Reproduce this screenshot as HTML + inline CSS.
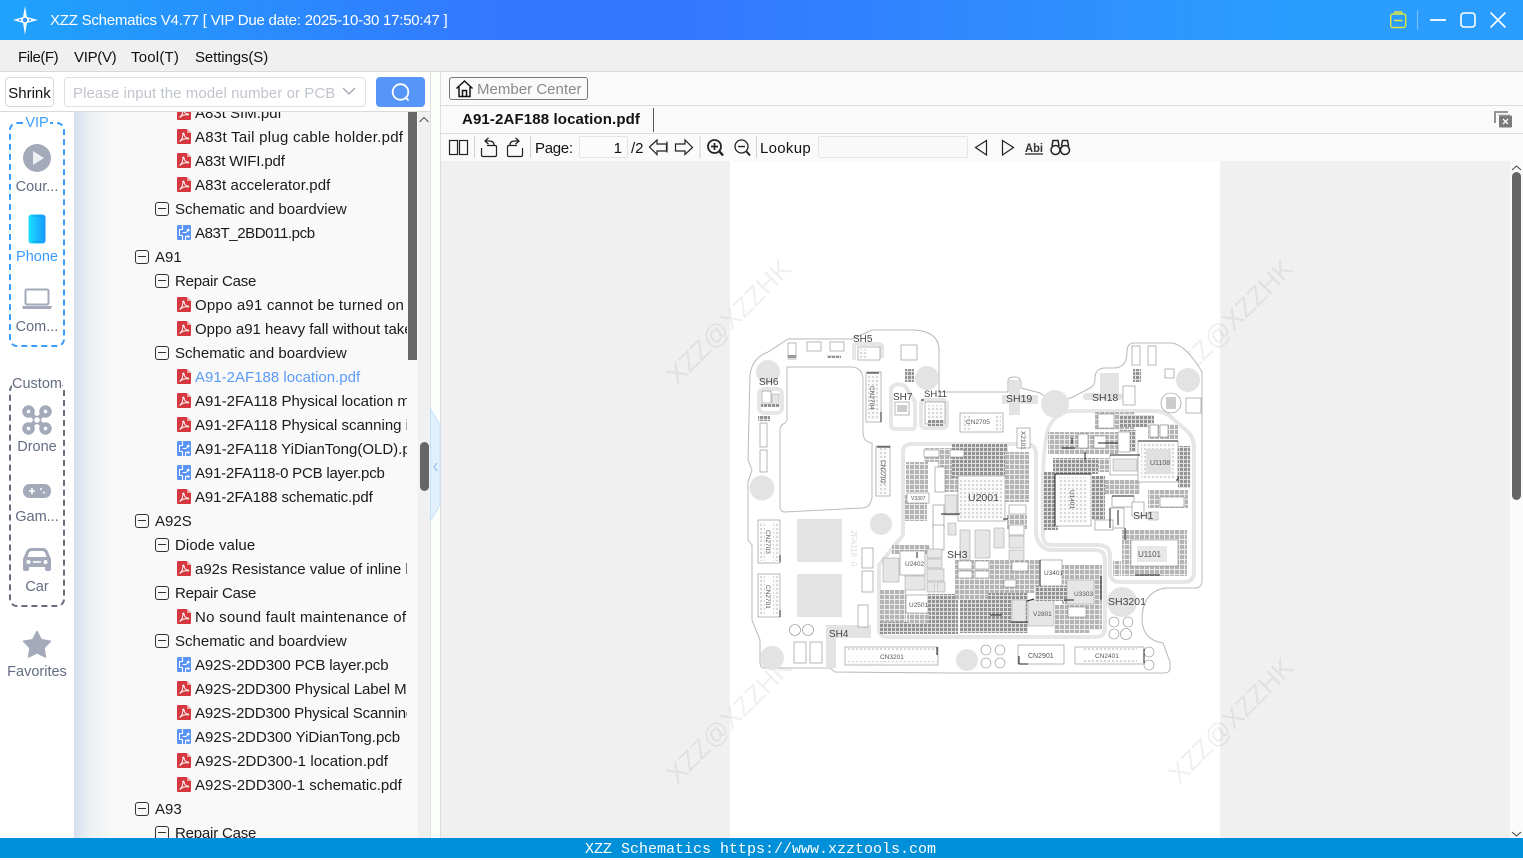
<!DOCTYPE html>
<html><head><meta charset="utf-8"><title>XZZ Schematics</title>
<style>
*{box-sizing:border-box}
html,body{margin:0;padding:0;width:1523px;height:858px;overflow:hidden;background:#fff;font-family:"Liberation Sans","Noto Sans CJK SC",sans-serif;font-size:15px;color:#111}
.a{position:absolute}
.t{position:absolute;white-space:nowrap;line-height:20px;margin-top:1px}
#tree{position:absolute;left:0;top:112px;width:407px;height:726px;overflow:hidden}
#in{position:absolute;left:0;top:1px;width:407px;height:726px}
.r{position:absolute;height:24px;line-height:24px;white-space:nowrap;font-size:15px;color:#1a1a1a;margin-top:1px}
.e{position:absolute;width:14px;height:14px;border:1.3px solid #333;border-radius:3px}
.e:after{content:"";position:absolute;left:2px;right:2px;top:5px;height:1.3px;background:#333}
.side{position:absolute;left:0;width:74px;text-align:center;font-size:14.5px;color:#636c82;line-height:18px;margin-top:1px}
.w{fill:#fff;stroke:#888;stroke-width:.6}
.g{fill:#e6e6e6;stroke:#999;stroke-width:.5}
</style></head><body>
<svg width="0" height="0" style="position:absolute"><defs>
<symbol id="pdf" viewBox="0 0 14 15"><path d="M0 1Q0 0 1 0H10L14 4V14Q14 15 13 15H1Q0 15 0 14Z" fill="#d5383f"/><path d="M10 0L14 4H10Z" fill="#f0a0a0"/><path d="M3 12C5 11 6 7 6 4.500C6 3.500 7 4 7 5C7 7.500 9 9 11.500 9.200C12 9.500 11.500 10 11 9.800C8.500 9.500 6 10 4.500 11C3.500 12.500 2.500 12.500 3 12Z" fill="none" stroke="#fff" stroke-width="1"/></symbol>
<symbol id="pcb" viewBox="0 0 14 15"><rect width="14" height="15" rx="1.500" fill="#5b95f6"/><path d="M5.500 0V4.500H2.500V10.500H5.500V15M5.500 7.500H9L10.500 6M8.500 15V11.500H10.500" fill="none" stroke="#fff" stroke-width="1"/><circle cx="11.300" cy="5" r="1.300" fill="#fff"/><circle cx="11.300" cy="11.500" r="1.300" fill="#fff"/></symbol>
<pattern id="p1" width="4" height="4" patternUnits="userSpaceOnUse"><rect width="4" height="4" fill="#e0e0e0"/><rect width="3" height="3" fill="#929292"/></pattern>
<pattern id="p2" width="5" height="5" patternUnits="userSpaceOnUse"><rect width="5" height="5" fill="#ececec"/><rect width="4" height="4" fill="#b4b4b4"/></pattern>
<pattern id="p3" width="4" height="4" patternUnits="userSpaceOnUse"><rect width="4" height="4" fill="#fafafa"/><rect width="2" height="2" fill="#d8d8d8"/></pattern>
</defs></svg>

<!-- title bar -->
<div class="a" style="left:0;top:0;width:1523px;height:40px;background:linear-gradient(90deg,#1ea3fc 0,#3477ff 33%,#3477ff 45%,#2b9dff 85%,#2b9dff 100%)"></div>
<svg class="a" style="left:10px;top:5px" width="30" height="30" viewBox="0 0 30 30"><path d="M15 1L17 12L28 15L17 18L15 30L13 18L3 15L13 12Z" fill="#fff" opacity=".95"/><circle cx="15" cy="15" r="2.200" fill="#3a90f0"/><circle cx="10" cy="15" r="1" fill="#3a90f0"/><circle cx="20" cy="15" r="1" fill="#3a90f0"/></svg>
<div class="t" style="left:50px;top:10px;color:#fff;font-size:15px;letter-spacing:-.23px">XZZ Schematics V4.77 [ VIP Due date: 2025-10-30 17:50:47 ]</div>
<svg class="a" style="left:1385px;top:8px" width="125" height="24" viewBox="0 0 125 24"><g fill="none" stroke="#dfe63f" stroke-width="1.400"><rect x="5.700" y="6" width="15" height="13.500" rx="2"/><path d="M10 6V4H16.500V6M9 12.500H17.500"/></g><path d="M32.500 2V22" stroke="#7cc0ff" stroke-width="1"/><g fill="none" stroke="#fff"><path d="M45 12H61" stroke-width="1.800"/><rect x="76" y="5" width="14" height="14" rx="3" stroke-width="1.600"/><path d="M105.500 4.500L120.500 19.500M120.500 4.500L105.500 19.500" stroke-width="1.600"/></g></svg>

<!-- menu -->
<div class="a" style="left:0;top:40px;width:1523px;height:32px;background:#f0f0f0;border-bottom:1px solid #d9d9d9"></div>
<div class="t" style="left:18px;top:47px;letter-spacing:-.45px">File(F)</div>
<div class="t" style="left:74px;top:47px;letter-spacing:-.3px">VIP(V)</div>
<div class="t" style="left:131px;top:47px;letter-spacing:.2px">Tool(T)</div>
<div class="t" style="left:195px;top:47px;letter-spacing:-.1px">Settings(S)</div>

<!-- left panel -->
<div class="a" style="left:0;top:72px;width:431px;height:766px;background:#fff"></div>
<div class="a" style="left:5px;top:77px;width:49px;height:30px;border:1px solid #d9d9d9;border-radius:4px;text-align:center;line-height:31px;font-size:15px">Shrink</div>
<div class="a" style="left:64px;top:77px;width:302px;height:30px;border:1px solid #dcdfe6;border-radius:4px;background:#fff;line-height:31px;padding-left:8px;color:#c0c4cc;font-size:15px;white-space:nowrap;letter-spacing:.06px">Please input the model number or PCB</div>
<svg class="a" style="left:342px;top:86px" width="14" height="10"><path d="M1 2L7 8L13 2" fill="none" stroke="#a8abb2" stroke-width="1.400"/></svg>
<div class="a" style="left:376px;top:77px;width:49px;height:30px;border-radius:4px;background:#5596f8"></div>
<svg class="a" style="left:390px;top:82px" width="22" height="21"><circle cx="10.500" cy="10" r="7.800" fill="none" stroke="#fff" stroke-width="1.800"/><path d="M15.500 15.500L18.500 18.500" stroke="#fff" stroke-width="1.800"/></svg>
<div class="a" style="left:0;top:111px;width:431px;height:1px;background:#d9d9d9"></div>

<!-- tree bg -->
<div class="a" style="left:74px;top:112px;width:344px;height:726px;background:linear-gradient(90deg,#d6e0f1 0,#eef0f5 16px,#f9f9f9 40px,#f9f9f9 100%)"></div>
<div class="a" style="left:418px;top:112px;width:12px;height:726px;background:#f0f0f0"></div>
<div class="a" style="left:430px;top:72px;width:1px;height:766px;background:#dfdfdf"></div>
<div class="a" style="left:431px;top:72px;width:10px;height:766px;background:#fbfffb"></div>
<div class="a" style="left:440px;top:72px;width:1px;height:766px;background:#dedede"></div>
<div class="a" style="left:408px;top:112px;width:9px;height:248px;background:#686868"></div>
<div class="a" style="left:420px;top:442px;width:9px;height:49px;border-radius:5px;background:#666"></div>
<svg class="a" style="left:418px;top:115px" width="12" height="10"><path d="M1.500 7L6 2.500L10.500 7" fill="none" stroke="#555" stroke-width="1"/></svg>
<svg class="a" style="left:430px;top:405px" width="11" height="120"><path d="M0.500 4L10 20V100L0.500 116Z" fill="#e2f0fd" stroke="#c8e2fa"/><path d="M7 58L4 62L7 66" fill="none" stroke="#7bb6ef" stroke-width="1"/></svg>

<!-- tree rows -->
<div id="tree"><div id="in">
<svg class="a" style="left:177px;top:-8px" width="14" height="15"><use href="#pdf"/></svg><div class="r" style="left:195px;top:-12px">A83t SIM.pdf</div>
<svg class="a" style="left:177px;top:16px" width="14" height="15"><use href="#pdf"/></svg><div class="r" style="left:195px;top:12px;letter-spacing:.27px">A83t Tail plug cable holder.pdf</div>
<svg class="a" style="left:177px;top:40px" width="14" height="15"><use href="#pdf"/></svg><div class="r" style="left:195px;top:36px;letter-spacing:-.15px">A83t WIFI.pdf</div>
<svg class="a" style="left:177px;top:64px" width="14" height="15"><use href="#pdf"/></svg><div class="r" style="left:195px;top:60px;letter-spacing:.1px">A83t accelerator.pdf</div>
<div class="e" style="left:155px;top:89px"></div><div class="r" style="left:175px;top:84px">Schematic and boardview</div>
<svg class="a" style="left:177px;top:112px" width="14" height="15"><use href="#pcb"/></svg><div class="r" style="left:195px;top:108px;letter-spacing:-.4px">A83T_2BD011.pcb</div>
<div class="e" style="left:135px;top:137px"></div><div class="r" style="left:155px;top:132px">A91</div>
<div class="e" style="left:155px;top:161px"></div><div class="r" style="left:175px;top:156px;letter-spacing:-.2px">Repair Case</div>
<svg class="a" style="left:177px;top:184px" width="14" height="15"><use href="#pdf"/></svg><div class="r" style="left:195px;top:180px;letter-spacing:.2px">Oppo a91 cannot be turned on</div>
<svg class="a" style="left:177px;top:208px" width="14" height="15"><use href="#pdf"/></svg><div class="r" style="left:195px;top:204px">Oppo a91 heavy fall without take</div>
<div class="e" style="left:155px;top:233px"></div><div class="r" style="left:175px;top:228px">Schematic and boardview</div>
<svg class="a" style="left:177px;top:256px" width="14" height="15"><use href="#pdf"/></svg><div class="r" style="left:195px;top:252px;color:#5b9bf8">A91-2AF188 location.pdf</div>
<svg class="a" style="left:177px;top:280px" width="14" height="15"><use href="#pdf"/></svg><div class="r" style="left:195px;top:276px">A91-2FA118 Physical location map</div>
<svg class="a" style="left:177px;top:304px" width="14" height="15"><use href="#pdf"/></svg><div class="r" style="left:195px;top:300px">A91-2FA118 Physical scanning image</div>
<svg class="a" style="left:177px;top:328px" width="14" height="15"><use href="#pcb"/></svg><div class="r" style="left:195px;top:324px">A91-2FA118 YiDianTong(OLD).pcb</div>
<svg class="a" style="left:177px;top:352px" width="14" height="15"><use href="#pcb"/></svg><div class="r" style="left:195px;top:348px;letter-spacing:-.2px">A91-2FA118-0 PCB layer.pcb</div>
<svg class="a" style="left:177px;top:376px" width="14" height="15"><use href="#pdf"/></svg><div class="r" style="left:195px;top:372px;letter-spacing:-.1px">A91-2FA188 schematic.pdf</div>
<div class="e" style="left:135px;top:401px"></div><div class="r" style="left:155px;top:396px">A92S</div>
<div class="e" style="left:155px;top:425px"></div><div class="r" style="left:175px;top:420px;letter-spacing:.1px">Diode value</div>
<svg class="a" style="left:177px;top:448px" width="14" height="15"><use href="#pdf"/></svg><div class="r" style="left:195px;top:444px;letter-spacing:-.02px">a92s Resistance value of inline h</div>
<div class="e" style="left:155px;top:473px"></div><div class="r" style="left:175px;top:468px;letter-spacing:-.2px">Repair Case</div>
<svg class="a" style="left:177px;top:496px" width="14" height="15"><use href="#pdf"/></svg><div class="r" style="left:195px;top:492px;letter-spacing:.27px">No sound fault maintenance of</div>
<div class="e" style="left:155px;top:521px"></div><div class="r" style="left:175px;top:516px">Schematic and boardview</div>
<svg class="a" style="left:177px;top:544px" width="14" height="15"><use href="#pcb"/></svg><div class="r" style="left:195px;top:540px;letter-spacing:-.1px">A92S-2DD300 PCB layer.pcb</div>
<svg class="a" style="left:177px;top:568px" width="14" height="15"><use href="#pdf"/></svg><div class="r" style="left:195px;top:564px;letter-spacing:-.1px">A92S-2DD300 Physical Label Map</div>
<svg class="a" style="left:177px;top:592px" width="14" height="15"><use href="#pdf"/></svg><div class="r" style="left:195px;top:588px;letter-spacing:-.15px">A92S-2DD300 Physical Scanning</div>
<svg class="a" style="left:177px;top:616px" width="14" height="15"><use href="#pcb"/></svg><div class="r" style="left:195px;top:612px">A92S-2DD300 YiDianTong.pcb</div>
<svg class="a" style="left:177px;top:640px" width="14" height="15"><use href="#pdf"/></svg><div class="r" style="left:195px;top:636px;letter-spacing:.08px">A92S-2DD300-1 location.pdf</div>
<svg class="a" style="left:177px;top:664px" width="14" height="15"><use href="#pdf"/></svg><div class="r" style="left:195px;top:660px">A92S-2DD300-1 schematic.pdf</div>
<div class="e" style="left:135px;top:689px"></div><div class="r" style="left:155px;top:684px">A93</div>
<div class="e" style="left:155px;top:713px"></div><div class="r" style="left:175px;top:708px;letter-spacing:-.2px">Repair Case</div>
</div></div>

<!-- sidebar -->
<div class="a" style="left:9px;top:122px;width:56px;height:225px;border:2px dashed #3a9dfb;border-radius:8px"></div>
<div class="side" style="top:113px;color:#3a9dfb"><span style="background:#fff;padding:0 1px">VIP</span></div>
<svg class="a" style="left:22px;top:143px" width="30" height="30"><circle cx="15" cy="15" r="14" fill="#a4aaba"/><path d="M11 8L22 15L11 22Z" fill="#eef0f4"/></svg>
<div class="side" style="top:177px">Cour...</div>
<svg class="a" style="left:27px;top:213px" width="20" height="32"><defs><linearGradient id="ph" x1="0" x2="1"><stop offset="0" stop-color="#18e0ff"/><stop offset="1" stop-color="#1a96ff"/></linearGradient></defs><rect x="1.500" y="1.500" width="17" height="29" rx="3" fill="url(#ph)"/><path d="M6 3H14M6 28.500H14" stroke="#0d8fe0" stroke-width=".8"/></svg>
<div class="side" style="top:247px;color:#3a9dfb">Phone</div>
<svg class="a" style="left:22px;top:288px" width="30" height="22"><rect x="3.500" y="1.500" width="23" height="15" rx="1.500" fill="none" stroke="#a4aaba" stroke-width="2"/><path d="M0 18H30L29 21H1Z" fill="#a4aaba"/></svg>
<div class="side" style="top:317px">Com...</div>
<div class="a" style="left:9px;top:383px;width:56px;height:224px;border:2px dashed #676c7e;border-radius:8px"></div>
<div class="side" style="top:374px"><span style="background:#fff">Custom</span></div>
<svg class="a" style="left:22px;top:405px" width="30" height="30"><g fill="none" stroke="#a4aaba" stroke-width="4.500"><circle cx="6.500" cy="6.500" r="4"/><circle cx="23.500" cy="6.500" r="4"/><circle cx="6.500" cy="23.500" r="4"/><circle cx="23.500" cy="23.500" r="4"/><path d="M9 9L21 21M21 9L9 21"/></g><circle cx="15" cy="15" r="3.500" fill="#fff" stroke="#a4aaba" stroke-width="1.500"/></svg>
<div class="side" style="top:437px">Drone</div>
<svg class="a" style="left:22px;top:483px" width="30" height="16"><rect x="1" y="1" width="28" height="14" rx="6.500" fill="#a4aaba"/><path d="M7 8H13M10 5V11" stroke="#fff" stroke-width="1.600"/><circle cx="19" cy="6" r="1" fill="#fff"/><circle cx="22" cy="9.500" r="1" fill="#fff"/></svg>
<div class="side" style="top:507px">Gam...</div>
<svg class="a" style="left:22px;top:547px" width="30" height="25"><path d="M1 12L4 5Q5.500 1 9 1H21Q24.500 1 26 5L29 12V22Q29 24 27 24H25Q23 24 23 22V20H7V22Q7 24 5 24H3Q1 24 1 22Z" fill="#a4aaba"/><path d="M5.500 10L7 5.500Q8 4 9.500 4H20.500Q22 4 23 5.500L24.500 10Z" fill="#fff"/><circle cx="6.500" cy="15" r="2" fill="#fff"/><circle cx="23.500" cy="15" r="2" fill="#fff"/><path d="M11 15H19" stroke="#fff" stroke-width="1.600"/></svg>
<div class="side" style="top:577px">Car</div>
<svg class="a" style="left:22px;top:630px" width="30" height="28"><path d="M15 1.500L19.300 9.700L28.500 11.200L22 17.800L23.400 27L15 22.800L6.600 27L8 17.800L1.500 11.200L10.700 9.700Z" fill="#a4aaba" stroke="#a4aaba" stroke-width="1.500" stroke-linejoin="round"/></svg>
<div class="side" style="top:662px">Favorites</div>

<!-- right panel -->
<div class="a" style="left:441px;top:72px;width:1082px;height:90px;background:#fafafa"></div>
<div class="a" style="left:441px;top:105px;width:1082px;height:1px;background:#dcdcdc"></div>
<div class="a" style="left:441px;top:133px;width:1082px;height:1px;background:#dcdcdc"></div>
<div class="a" style="left:449px;top:77px;width:139px;height:23px;border:1px solid #777;border-radius:3px"></div>
<svg class="a" style="left:455px;top:79px" width="19" height="19"><path d="M1.500 9.500L9.500 2L17.500 9.500M4 8V17.500H15V8M7.500 17.500V11.500H11.500V17.500" fill="none" stroke="#111" stroke-width="1.500"/></svg>
<div class="t" style="left:477px;top:79px;color:#8a8a8a;font-size:15px;letter-spacing:.02px">Member Center</div>
<div class="t" style="left:462px;top:109px;font-weight:bold;font-size:15px;color:#111;letter-spacing:.13px">A91-2AF188 location.pdf</div>
<div class="a" style="left:653px;top:108px;width:1px;height:24px;background:#555"></div>
<svg class="a" style="left:1494px;top:110px" width="19" height="18"><path d="M1 13V2H14" fill="none" stroke="#888" stroke-width="1.800"/><path d="M4 5H16" stroke="#bbb" stroke-width="1"/><rect x="5" y="5.500" width="13" height="12" rx="1" fill="#7a7a7a"/><path d="M9 9L14 14M14 9L9 14" stroke="#fff" stroke-width="1.300"/></svg>

<!-- toolbar -->
<svg class="a" style="left:442px;top:134px" width="640" height="27" viewBox="442 134 640 27">
<g fill="none" stroke="#222" stroke-width="1.200">
<rect x="449.500" y="140.500" width="8" height="14"/><rect x="459.500" y="140.500" width="8" height="14"/>
<path d="M481.500 148V155Q481.500 156.500 483 156.500H495Q496.500 156.500 496.500 155V147Q496.500 145.500 495 145.500H487"/><path d="M494 145C494 141.500 491.500 141 489 141H485M488.500 137.800L485 141L488.500 144.200" stroke-width="1.300"/>
<path d="M522.500 148V155Q522.500 156.500 521 156.500H509Q507.500 156.500 507.500 155V147Q507.500 145.500 509 145.500H517"/><path d="M510 145C510 141.500 512.500 141 515 141H519M515.500 137.800L519 141L515.500 144.200" stroke-width="1.300"/>
<path d="M667 141.500V152.500M649.500 147L657 140V144H666.500V151H657V154.500Z"/>
<path d="M675.500 144H685V140L692.500 147.500L685 154.500V151H675.500Z"/>
<circle cx="714.500" cy="146.500" r="6.500" stroke-width="1.800"/><path d="M719.500 151.500L723 155.500" stroke-width="2.400"/><path d="M711 146.500H718M714.500 143V150" stroke-width="1.700"/>
<circle cx="741.500" cy="146.500" r="6.500" stroke-width="1.300"/><path d="M746.500 151.500L750 155.500" stroke-width="2"/><path d="M738 146.500H745" stroke-width="1.400"/>
<path d="M986.500 140.500L975.500 147.500L986.500 155Z"/><path d="M1002.500 140.500L1013.500 147.500L1002.500 155Z"/>
<path d="M1025 154H1043" stroke-width="1.300"/>
<circle cx="1055.500" cy="150" r="4.500" stroke-width="1.500"/><circle cx="1065" cy="150" r="4.500" stroke-width="1.500"/><path d="M1052 146L1053 140.500H1058L1059 146M1061.500 146L1062.500 140.500H1067.500L1068.500 146M1059 148H1061.500" stroke-width="1.500"/>
</g>
<g stroke="#cfcfcf"><path d="M474.500 136V158M530.500 136V158M700 136V158M756.500 136V158"/></g>
<text x="1025" y="152" font-family="Liberation Sans" font-size="12" font-weight="bold" fill="#333" textLength="18" lengthAdjust="spacingAndGlyphs">Abi</text>
</svg>
<div class="t" style="left:535px;top:138px;letter-spacing:-.3px">Page:</div>
<div class="a" style="left:579px;top:136px;width:49px;height:22px;border:1px solid #e4e4e4;border-radius:2px;background:#fbfbfb;text-align:right;padding-right:5px;line-height:23px">1</div>
<div class="t" style="left:631px;top:138px">/2</div>
<div class="t" style="left:760px;top:138px;letter-spacing:.3px">Lookup</div>
<div class="a" style="left:818px;top:136px;width:150px;height:22px;border:1px solid #e4e4e4;border-radius:2px;background:#f9f9f9"></div>

<!-- content -->
<div class="a" style="left:441px;top:161px;width:1069px;height:677px;background:#f0f0f0"></div>
<div class="a" style="left:730px;top:161px;width:490px;height:677px;background:#fff"></div>
<div class="a" style="left:1510px;top:161px;width:13px;height:677px;background:#fafafa"></div>
<div class="a" style="left:1512px;top:172px;width:9px;height:328px;border-radius:5px;background:#666"></div>
<svg class="a" style="left:1510px;top:164px" width="13" height="8"><path d="M2 6L6.500 2L11 6" fill="none" stroke="#444"/></svg>
<svg class="a" style="left:1510px;top:831px" width="13" height="7"><path d="M2 1L6.500 5L11 1" fill="none" stroke="#444"/></svg>

<!-- board -->
<svg class="a" style="left:0;top:0" width="1523" height="858" viewBox="0 0 1523 858" font-family="Liberation Sans">
<g font-size="26.500" fill="#000" fill-opacity=".06" text-anchor="middle">
<text transform="translate(735,328) rotate(-45)">XZZ@XZZHK</text>
<text transform="translate(1237,328) rotate(-45)">XZZ@XZZHK</text>
<text transform="translate(735,727) rotate(-45)">XZZ@XZZHK</text>
<text transform="translate(1237,727) rotate(-45)">XZZ@XZZHK</text>
</g>
<!-- outline -->
<path d="M788 339H852L872 330H915Q939 332 939 350V392H1008V381Q1008 377 1014 377Q1021 377 1021 383V388L1040 393Q1055 404 1073 397L1090 388Q1095 386 1095 378Q1095 369 1104 368H1115Q1127 367 1127 352Q1127 343 1134 343H1172Q1186 345 1202 372V580Q1202 588 1195 588H1165Q1142 592 1142 620Q1143 640 1163 643L1170 662V668Q1170 673 1164 673H952L835 672L830 668H765Q760 668 760 662V640L752 620V545L748 540V482L752 470L748 460L750 375Q752 358 768 352Z" fill="#fff" stroke="#b8b8b8" stroke-width="1"/>
<path d="M787 367H852Q863 368 863 380V432Q863 442 872 443V498Q870 508 862 508L785 512Q780 512 780 506V430Q780 425 785 423L787 420Z" fill="#fff" stroke="#bcbcbc"/>
<!-- shield contours -->
<g fill="none" stroke="#e6e6e6" stroke-width="4">
<path d="M912 444H1026Q1036 444 1036 455V530Q1036 547 1050 550H1095Q1105 550 1105 560V628Q1105 637 1095 637H888Q879 637 879 628V565L903 535V452Q903 444 912 444Z"/>
<path d="M1043 535Q1041 440 1050 425Q1058 411 1072 411H1155Q1165 411 1172 418L1188 432Q1194 438 1194 448V572Q1194 582 1184 582H1120Q1110 582 1110 572V556Q1110 545 1098 545H1052Q1043 545 1043 535"/>
<rect x="759" y="389" width="23" height="24" rx="5"/><rect x="921" y="400" width="26" height="28" rx="4"/><path d="M891 388V425Q891 429 896 429H912Q915 429 915 424V402L905 386Q896 382 891 388Z"/>
<path d="M854 360V347Q854 344 858 344H878Q882 344 882 347V358"/>
</g>
<!-- gray pads -->
<g fill="#e3e3e3">
<circle cx="768" cy="372" r="12"/><circle cx="762" cy="488" r="12.500"/><circle cx="927" cy="378" r="12"/><circle cx="1055" cy="404" r="14"/><circle cx="1188" cy="380" r="12"/><circle cx="881" cy="524" r="11"/><circle cx="772" cy="658" r="12"/><circle cx="967" cy="660" r="11"/><circle cx="1122" cy="602" r="15"/>
<rect x="797" y="519" width="45" height="43"/><rect x="797" y="574" width="45" height="43"/>
<rect x="1100" y="373" width="19" height="23"/><rect x="1009" y="380" width="11" height="35"/><rect x="1002" y="395" width="36" height="9"/><rect x="1083" y="393" width="40" height="7" rx="3"/>
<path d="M826 625H871V638H836V668H826Z"/>
</g>
<!-- connectors & outlined comps -->
<g>
<rect class="w" x="866" y="372" width="15" height="50"/><rect x="868" y="374" width="11" height="46" fill="url(#p3)"/>
<rect class="w" x="876" y="446" width="14" height="50"/><rect x="878" y="448" width="10" height="46" fill="url(#p3)"/>
<rect class="w" x="758" y="520" width="22" height="43"/><rect x="760" y="522" width="5" height="39" fill="url(#p3)"/><rect x="773" y="522" width="5" height="39" fill="url(#p3)"/>
<rect class="w" x="758" y="574" width="22" height="43"/><rect x="760" y="576" width="5" height="39" fill="url(#p3)"/><rect x="773" y="576" width="5" height="39" fill="url(#p3)"/>
<rect class="w" x="845" y="647" width="93" height="18"/><rect x="847" y="648" width="90" height="3" fill="url(#p3)"/><rect x="847" y="661" width="90" height="3" fill="url(#p3)"/>
<rect class="w" x="1018" y="645" width="46" height="19"/>
<rect class="w" x="1075" y="647" width="69" height="17"/><rect x="1082" y="648" width="55" height="3" fill="url(#p3)"/><rect x="1082" y="660" width="55" height="3" fill="url(#p3)"/>
<rect class="w" x="960" y="413" width="43" height="19"/><rect x="962" y="415" width="8" height="15" fill="url(#p3)"/><rect x="995" y="415" width="6" height="15" fill="url(#p3)"/>
<rect class="w" x="1123" y="386" width="12" height="19"/>
<rect class="w" x="895" y="402" width="14" height="13"/><rect x="897" y="405" width="10" height="7" fill="#ccc"/>
<rect class="w" x="925" y="402" width="20" height="22"/><rect x="928" y="405" width="15" height="15" fill="url(#p3)"/><rect x="928" y="420" width="16" height="6" fill="url(#p1)"/>
<rect class="w" x="858" y="347" width="22" height="13"/><rect x="860" y="349" width="8" height="9" fill="url(#p3)"/>
<rect class="w" x="762" y="391" width="9" height="12"/><rect class="g" x="772" y="394" width="7" height="12"/><rect x="761" y="403" width="18" height="4" fill="url(#p1)"/>
<rect x="758" y="416" width="12" height="5" fill="url(#p1)"/>
<rect x="827" y="355" width="14" height="3" fill="url(#p1)"/>
<rect class="w" x="901" y="345" width="16" height="15"/><rect x="905" y="369" width="9" height="13" fill="url(#p1)"/>
<rect class="w" x="788" y="343" width="8" height="16"/><rect x="788" y="355" width="8" height="3" fill="#999"/>
<rect class="w" x="807" y="342" width="14" height="9"/><rect class="w" x="830" y="342" width="14" height="9"/>
<rect class="w" x="1132" y="346" width="8" height="19"/><rect class="w" x="1148" y="346" width="8" height="19"/><rect x="1133" y="369" width="8" height="13" fill="url(#p1)"/>
<circle class="w" cx="1171" cy="403" r="10"/><rect x="1166" y="397" width="10" height="12" fill="#ccc"/><rect class="w" x="1186" y="398" width="15" height="15"/><rect class="w" x="1165" y="369" width="9" height="9"/>
<rect class="w" x="760" y="423" width="7" height="24"/><rect class="w" x="760" y="450" width="7" height="22"/>
<rect class="w" x="862" y="548" width="11" height="20"/><rect class="w" x="862" y="571" width="11" height="21"/><rect class="w" x="858" y="605" width="10" height="22"/>
<rect class="w" x="794" y="642" width="12" height="21"/><rect class="w" x="810" y="642" width="12" height="21"/>
<circle class="w" cx="795" cy="630" r="5.500"/><circle class="w" cx="808" cy="630" r="5.500"/><circle class="w" cx="986" cy="650" r="5"/><circle class="w" cx="986" cy="663" r="5"/><circle class="w" cx="1000" cy="650" r="5"/><circle class="w" cx="1000" cy="663" r="5"/><circle class="w" cx="1114" cy="622" r="5"/><circle class="w" cx="1128" cy="622" r="5"/><circle class="w" cx="1114" cy="634" r="5"/><circle class="w" cx="1126" cy="634" r="5.500"/><circle class="w" cx="1149" cy="652" r="5"/><circle class="w" cx="1149" cy="665" r="5"/>
</g>
<!-- SH3 cluster upper -->
<g>
<rect x="906" y="462" width="22" height="30" fill="url(#p2)"/>
<rect x="924" y="448" width="32" height="14" fill="url(#p2)"/>
<rect x="905" y="495" width="22" height="26" fill="url(#p2)"/>
<rect x="938" y="462" width="20" height="30" fill="url(#p2)"/>
<rect x="952" y="444" width="56" height="34" fill="url(#p1)"/>
<rect class="w" x="958" y="476" width="47" height="45"/>
<rect x="960" y="478" width="43" height="41" fill="url(#p3)"/>
<rect x="1005" y="452" width="24" height="50" fill="url(#p2)"/>
<rect x="1007" y="515" width="20" height="14" fill="url(#p2)"/>
<rect class="w" x="924" y="450" width="15" height="7"/><rect class="w" x="950" y="450" width="14" height="7"/>
<rect class="w" x="935" y="467" width="10" height="25"/>
<rect class="w" x="907" y="493" width="22" height="10"/>
<rect class="w" x="933" y="505" width="11" height="22"/><rect class="w" x="933" y="525" width="11" height="25"/>
<rect class="g" x="945" y="495" width="12" height="20"/><rect class="g" x="948" y="523" width="8" height="12"/>
<rect class="g" x="960" y="530" width="10" height="30"/><rect class="g" x="975" y="530" width="15" height="28"/><rect class="g" x="994" y="528" width="10" height="20"/>
<rect class="w" x="1009" y="505" width="17" height="9"/><rect class="w" x="1009" y="525" width="15" height="10"/>
<rect class="g" x="1009" y="536" width="15" height="12"/><rect class="g" x="1009" y="550" width="15" height="12"/>
<rect class="w" x="1017" y="428" width="13" height="20"/>
</g>
<!-- SH3 cluster lower -->
<g>
<rect class="g" x="883" y="558" width="16" height="24"/>
<rect x="892" y="545" width="38" height="9" fill="url(#p2)"/>
<rect class="w" x="900" y="551" width="25" height="24"/>
<rect class="g" x="905" y="576" width="20" height="14"/>
<rect class="g" x="927" y="549" width="15" height="9"/><rect class="g" x="927" y="559" width="15" height="9"/><rect class="g" x="927" y="569" width="17" height="12"/><rect class="g" x="927" y="582" width="8" height="10"/><rect class="g" x="937" y="582" width="8" height="10"/>
<rect x="880" y="590" width="26" height="32" fill="url(#p2)"/>
<rect x="880" y="622" width="55" height="12" fill="url(#p1)"/>
<rect class="w" x="906" y="595" width="22" height="18"/>
<rect x="928" y="594" width="30" height="40" fill="url(#p1)"/>
<rect x="907" y="613" width="22" height="10" fill="url(#p2)"/>
<rect x="955" y="560" width="38" height="18" fill="url(#p2)"/>
<rect class="w" x="958" y="561" width="14" height="8"/><rect class="w" x="975" y="561" width="14" height="8"/><rect class="w" x="958" y="571" width="14" height="7"/><rect class="w" x="975" y="571" width="14" height="7"/>
<rect x="955" y="578" width="35" height="22" fill="url(#p2)"/>
<rect x="960" y="600" width="30" height="33" fill="url(#p1)"/>
<rect x="990" y="560" width="50" height="33" fill="url(#p2)"/>
<rect class="w" x="1012" y="562" width="16" height="9"/>
<rect x="988" y="593" width="40" height="40" fill="url(#p1)"/>
<rect class="w" x="1004" y="580" width="12" height="7"/><rect class="g" x="1012" y="600" width="14" height="22"/>
<rect class="g" x="1028" y="600" width="26" height="26"/>
<rect class="w" x="1040" y="560" width="22" height="26"/>
<rect x="1062" y="565" width="40" height="65" fill="url(#p2)"/>
<rect class="g" x="1067" y="580" width="27" height="24"/>
<rect x="1035" y="586" width="32" height="15" fill="url(#p1)"/>
<rect x="1054" y="605" width="36" height="28" fill="url(#p2)"/>
<rect class="w" x="1068" y="607" width="18" height="10"/>
</g>
<!-- right cluster -->
<g>
<rect x="1044" y="472" width="14" height="58" fill="url(#p1)"/>
<rect x="1053" y="458" width="45" height="16" fill="url(#p1)"/>
<rect class="w" x="1055" y="474" width="36" height="52"/>
<rect x="1058" y="477" width="30" height="46" fill="url(#p3)"/>
<rect x="1091" y="476" width="14" height="44" fill="url(#p1)"/>
<rect x="1048" y="432" width="28" height="22" fill="url(#p2)"/>
<rect x="1076" y="432" width="42" height="22" fill="url(#p2)"/>
<rect class="w" x="1078" y="434" width="10" height="14"/><rect class="w" x="1094" y="436" width="12" height="12"/>
<rect x="1095" y="412" width="40" height="18" fill="url(#p2)"/>
<rect class="w" x="1098" y="414" width="16" height="14"/>
<rect x="1120" y="430" width="16" height="22" fill="url(#p1)"/>
<rect class="w" x="1110" y="455" width="30" height="20"/><rect class="g" x="1113" y="459" width="24" height="12"/>
<rect class="w" x="1118" y="432" width="12" height="20"/>
<rect x="1098" y="458" width="12" height="14" fill="url(#p2)"/>
<rect x="1120" y="415" width="34" height="12" fill="url(#p1)"/>
<rect x="1105" y="480" width="35" height="14" fill="url(#p2)"/>
<rect class="w" x="1112" y="496" width="22" height="11"/>
<rect class="w" x="1132" y="502" width="12" height="14"/>
<rect class="w" x="1110" y="508" width="14" height="20"/>
<rect class="w" x="1095" y="520" width="18" height="10"/>
<rect class="w" x="1138" y="441" width="40" height="41"/>
<rect x="1141" y="444" width="34" height="35" fill="url(#p3)"/>
<rect x="1146" y="449" width="25" height="25" fill="#e0e0e0"/>
<rect x="1178" y="446" width="12" height="42" fill="url(#p1)"/>
<rect x="1148" y="490" width="40" height="18" fill="url(#p2)"/><rect class="w" x="1160" y="497" width="24" height="10"/>
<rect x="1122" y="530" width="65" height="46" fill="url(#p2)"/>
<rect class="w" x="1131" y="540" width="47" height="26"/>
<rect x="1137" y="546" width="30" height="16" fill="#e8e8e8"/>
<rect x="1113" y="561" width="8" height="15" fill="url(#p2)"/>
<rect class="g" x="1148" y="512" width="10" height="8"/>
<rect x="1148" y="424" width="30" height="15" fill="url(#p2)"/>
<rect class="w" x="1150" y="425" width="8" height="12"/><rect class="w" x="1160" y="425" width="8" height="12"/>
</g>
<!-- black marks -->
<path d="M1110 455H1140M1138 441H1178M1055 474H1091M1055 474V526M1098 443H1118M1072 438V444M1112 496H1134M1176 480H1178V476M941 514H960M1003 519H1008M1064 600H1074M1101 576V600M1040 586V560M877 447H890M1027 601L1034 599M867 373H879M921 400H924M1144 663V649M1019 664V656M1019 664H1028M937 647V655M1125 540V528M1135 575H1160M990 615H1002M917 552V558M1011 622H1028M1062 448H1075M1085 452V460M1118 510V525M780 555V562M780 610V617M1110 508V528M881 412V422" fill="none" stroke="#222" stroke-width="1"/>
<!-- labels -->
<g fill="#444" font-size="10">
<text x="853" y="342">SH5</text><text x="759" y="385">SH6</text><text x="893" y="400">SH7</text><text x="924" y="397" font-size="9.500">SH11</text><text x="1006" y="402" font-size="10.500">SH19</text><text x="1092" y="401" font-size="10.500">SH18</text><text x="968" y="501" font-size="10.500">U2001</text><text x="947" y="558" font-size="10.500">SH3</text><text x="829" y="637">SH4</text><text x="1133" y="519" font-size="10.500">SH1</text><text x="1108" y="605" font-size="10.500">SH3201</text>
</g>
<g fill="#555" font-size="6.500">
<text x="1150" y="465" font-size="7">U1108</text><text x="1138" y="557" font-size="8">U1101</text><text x="1028" y="658" font-size="7">CN2901</text><text x="1095" y="658">CN2401</text><text x="880" y="659">CN3201</text><text x="966" y="424">CN2705</text><text x="905" y="566">U2402</text><text x="909" y="607">U2501</text><text x="1044" y="575">U3401</text><text x="1074" y="596">U3303</text><text x="1033" y="616">V2801</text><text x="911" y="500" font-size="5">V3307</text>
<text transform="translate(870,386) rotate(90)">CN2704</text><text transform="translate(881,460) rotate(90)">CN2702</text><text transform="translate(766,530) rotate(90)">CN2703</text><text transform="translate(766,585) rotate(90)">CN2701</text><text transform="translate(1021,431) rotate(90)">X2101</text><text transform="translate(1070,490) rotate(90)">U1401</text>
</g>
<text transform="translate(851,530) rotate(90)" font-size="8" fill="#ddd">2FA118 -0</text>
</svg>

<!-- status -->
<div class="a" style="left:0;top:838px;width:1523px;height:20px;background:#0090d9"></div>
<div class="t" style="left:585px;top:839px;color:#fff;font-family:'Liberation Mono',monospace;font-size:15px">XZZ Schematics https://www.xzztools.com</div>
</body></html>
